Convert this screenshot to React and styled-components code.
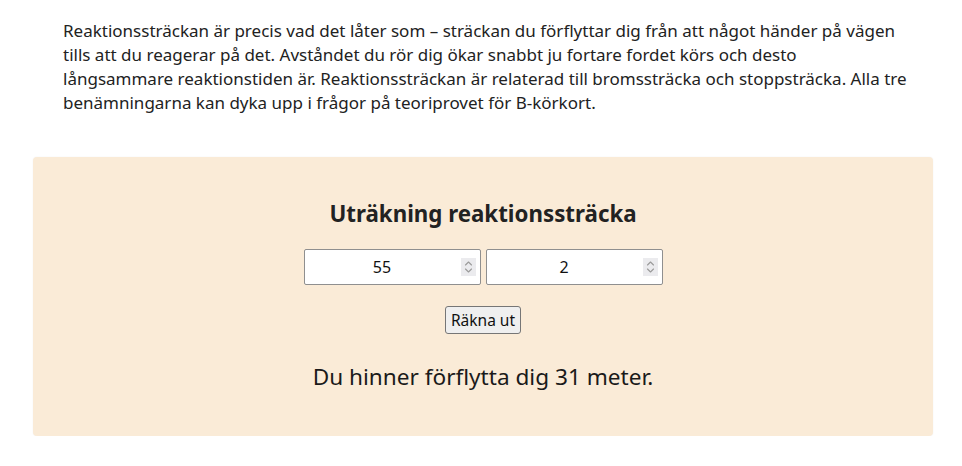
import React, { useState } from 'react';
import styled, { createGlobalStyle } from 'styled-components';

const GlobalStyle = createGlobalStyle`
  body {
    margin: 0;
    background: #ffffff;
    font-family: "Noto Sans", "Open Sans", sans-serif;
    color: #1b1b1b;
  }
`;

const Page = styled.main`
  width: 900px;
  margin: 0 auto;
  padding: 19px 0 0;
  position: relative;
  left: 2px;
`;

const Intro = styled.p`
  margin: 0 0 42px;
  padding: 0 24px 0 30px;
  font-size: 17px;
  line-height: 24px;
  color: #222;
`;

const Calculator = styled.section`
  background: #faebd7;
  border-radius: 4px;
  box-shadow: 0 0 2px rgba(0, 0, 0, 0.06);
  height: 279px;
  display: flex;
  flex-direction: column;
  align-items: center;
  padding-top: 42px;
  box-sizing: border-box;
`;

const Title = styled.h2`
  margin: 0 0 20px;
  font-size: 22.3px;
  font-weight: 700;
  line-height: 30px;
  color: #222;
`;

const Inputs = styled.div`
  display: flex;
  gap: 5px;
`;

const Field = styled.div`
  position: relative;
`;

const NumberInput = styled.input`
  width: 177px;
  height: 36px;
  box-sizing: border-box;
  border: 1px solid #8f8f8f;
  border-radius: 2px;
  background: #fff;
  text-align: center;
  font-family: "Noto Sans", sans-serif;
  font-size: 16px;
  color: #111;
  padding: 0 24px 0 4px;
  appearance: textfield;
  -moz-appearance: textfield;
  &::-webkit-inner-spin-button,
  &::-webkit-outer-spin-button {
    -webkit-appearance: none;
    margin: 0;
  }
`;

const Spinner = styled.span`
  position: absolute;
  right: 5px;
  top: 9px;
  width: 15px;
  height: 18px;
  background: #ebebee;
  display: flex;
  align-items: center;
  justify-content: center;
  pointer-events: none;
`;

const Button = styled.button`
  margin-top: 21px;
  height: 28px;
  padding: 0 5px;
  font-family: "Noto Sans", sans-serif;
  font-size: 15.5px;
  color: #111;
  background: #efefef;
  border: 1px solid #767676;
  border-radius: 3px;
`;

const Result = styled.p`
  margin: 28px 0 0;
  font-size: 22.6px;
  line-height: 30px;
  color: #1a1a1a;
`;

const SpinIcon = () => (
  <svg width="9" height="14" viewBox="0 0 9 14" fill="none" stroke="#9a9a9a" strokeWidth="1.1" strokeLinecap="round" strokeLinejoin="round">
    <path d="M1.5 5 L4.5 2 L7.5 5" />
    <path d="M1.5 9 L4.5 12 L7.5 9" />
  </svg>
);

const NumberField = ({ value, onChange }) => (
  <Field>
    <NumberInput type="number" value={value} onChange={(e) => onChange(e.target.value)} />
    <Spinner>
      <SpinIcon />
    </Spinner>
  </Field>
);

export default function App() {
  const [speed, setSpeed] = useState(55);
  const [time, setTime] = useState(2);
  const [dist, setDist] = useState(31);

  const calc = () => {
    setDist(Math.round((speed / 3.6) * time));
  };

  return (
    <>
      <GlobalStyle />
      <Page>
        <Intro>
          Reaktionssträckan är precis vad det låter som – sträckan du förflyttar dig från att något händer på vägen
          tills att du reagerar på det. Avståndet du rör dig ökar snabbt ju fortare fordet körs och desto
          långsammare reaktionstiden är. Reaktionssträckan är relaterad till bromssträcka och stoppsträcka. Alla tre
          benämningarna kan dyka upp i frågor på teoriprovet för B-körkort.
        </Intro>
        <Calculator>
          <Title>Uträkning reaktionssträcka</Title>
          <Inputs>
            <NumberField value={speed} onChange={setSpeed} />
            <NumberField value={time} onChange={setTime} />
          </Inputs>
          <Button onClick={calc}>Räkna ut</Button>
          <Result>Du hinner förflytta dig {dist} meter.</Result>
        </Calculator>
      </Page>
    </>
  );
}
